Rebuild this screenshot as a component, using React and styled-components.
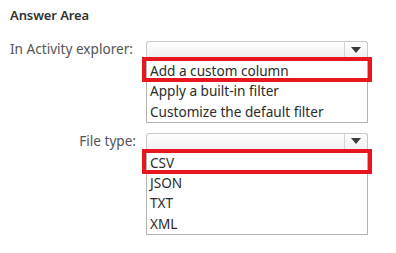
import React from "react";
import styled, { createGlobalStyle } from "styled-components";

const GlobalStyle = createGlobalStyle`
  html, body {
    margin: 0;
    padding: 0;
    background: #ffffff;
  }
  body {
    font-family: "Noto Sans", "Open Sans", sans-serif;
    color: #333;
  }
`;

const Page = styled.div`
  width: 396px;
  height: 253px;
  padding: 7px 0 0 10px;
  box-sizing: border-box;
  overflow: hidden;
`;

const Title = styled.div`
  font-size: 13px;
  font-weight: 600;
  line-height: 17px;
  color: #333;
  letter-spacing: -0.1px;
`;

const Form = styled.div`
  display: grid;
  grid-template-columns: 126px 222px;
  column-gap: 10px;
  row-gap: 10px;
  margin-top: 17px;
`;

const Label = styled.div`
  font-size: 13.6px;
  line-height: 15px;
  color: #555;
  text-align: ${(props) => (props.right ? "right" : "left")};
  white-space: nowrap;
`;

const Dropdown = styled.div`
  display: flex;
  flex-direction: column;
`;

const Select = styled.div`
  display: flex;
  height: 16px;
  border: 1px solid #c9c9c9;
  border-bottom: none;
  border-radius: 3px 3px 0 0;
  background: linear-gradient(#ffffff, #f1f1f1);
  box-sizing: border-box;
`;

const Field = styled.div`
  flex: 1;
`;

const Arrow = styled.div`
  width: 22px;
  border-left: 1px solid #d4d4d4;
  display: flex;
  align-items: center;
  justify-content: center;

  &::after {
    content: "";
    border-left: 5px solid transparent;
    border-right: 5px solid transparent;
    border-top: 6px solid #3a3a3a;
  }
`;

const List = styled.div`
  border: 1px solid #b4b4b4;
  padding: 3px 0 0 0;
  position: relative;
`;

const Item = styled.div`
  height: 20.3px;
  line-height: 20.3px;
  padding-left: 3px;
  font-size: 13.6px;
  color: #2b2b2b;
  white-space: nowrap;
`;

const Highlight = styled.div`
  position: absolute;
  left: -5px;
  right: -5px;
  top: -1px;
  height: 25px;
  border: 4px solid #e8161e;
  box-sizing: border-box;
  pointer-events: none;
`;

const rows = [
  {
    label: "In Activity explorer:",
    right: false,
    options: ["Add a custom column", "Apply a built-in filter", "Customize the default filter"],
  },
  {
    label: "File type:",
    right: true,
    options: ["CSV", "JSON", "TXT", "XML"],
  },
];

export default function App() {
  return (
    <>
      <GlobalStyle />
      <Page>
        <Title>Answer Area</Title>
        <Form>
          {rows.map((row) => (
            <React.Fragment key={row.label}>
              <Label right={row.right}>{row.label}</Label>
              <Dropdown>
                <Select>
                  <Field />
                  <Arrow />
                </Select>
                <List>
                  <Highlight />
                  {row.options.map((opt) => (
                    <Item key={opt}>{opt}</Item>
                  ))}
                </List>
              </Dropdown>
            </React.Fragment>
          ))}
        </Form>
      </Page>
    </>
  );
}
